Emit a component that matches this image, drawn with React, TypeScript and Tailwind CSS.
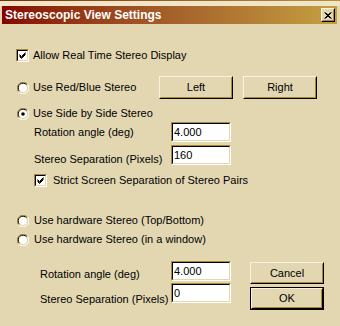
import React from "react";

const BG = "bg-[#E3D7B2]";

function Radio({ checked }: { checked?: boolean }) {
  return (
    <svg width="12" height="12" viewBox="0 0 12 12" className="shrink-0">
      <path d="M10.5 2.2 A5.5 5.5 0 0 0 1.5 9.8" fill="none" stroke="#A8883A" strokeWidth="1" />
      <path d="M9.6 2.8 A4.5 4.5 0 0 0 2.4 9.2" fill="none" stroke="#000" strokeWidth="1" />
      <path d="M1.5 9.8 A5.5 5.5 0 0 0 10.5 2.2" fill="none" stroke="#FFFFFF" strokeWidth="1" />
      <circle cx="6" cy="6" r="4" fill="#FFFFFF" />
      {checked && <circle cx="6" cy="6" r="1.8" fill="#000" />}
    </svg>
  );
}

function Check({ checked }: { checked?: boolean }) {
  return (
    <div className="w-[13px] h-[13px] shrink-0 border border-t-[#A8883A] border-l-[#A8883A] border-b-white border-r-white">
      <div className="w-full h-full border border-t-black border-l-black border-b-[#E3D7B2] border-r-[#E3D7B2] bg-white flex items-center justify-center">
        {checked && (
          <svg width="7" height="7" viewBox="0 0 7 7">
            <path d="M0.5 2.5 L2.5 4.5 L6.5 0.5 M0.5 3.5 L2.5 5.5 L6.5 1.5 M0.5 4.5 L2.5 6.5 L6.5 2.5" stroke="#000" strokeWidth="1" fill="none" />
          </svg>
        )}
      </div>
    </div>
  );
}

function Button({ label, def, className = "" }: { label: string; def?: boolean; className?: string }) {
  const inner = (
    <div className="w-full h-full border border-t-[#F8F2DE] border-l-[#F8F2DE] border-b-black border-r-black">
      <div className="w-full h-full border border-t-[#E3D7B2] border-l-[#E3D7B2] border-b-[#A8883A] border-r-[#A8883A] flex items-center justify-center text-black">
        {label}
      </div>
    </div>
  );
  if (def) {
    return <div className={`border border-black ${className}`}>{inner}</div>;
  }
  return <div className={className}>{inner}</div>;
}

function Input({ value }: { value: string }) {
  return (
    <div className="w-[60px] h-[20px] shrink-0 border border-t-[#A8883A] border-l-[#A8883A] border-b-white border-r-white">
      <div className="w-full h-full border border-t-black border-l-black border-b-[#E3D7B2] border-r-[#E3D7B2] bg-white flex items-center pl-[1px] text-black">
        {value}
      </div>
    </div>
  );
}

export default function App() {
  return (
    <div
      className={`w-[340px] h-[326px] ${BG} overflow-hidden text-[11px] leading-none text-black`}
      style={{ fontFamily: '"Liberation Sans", Arial, sans-serif' }}
    >
      <div className="h-px bg-gradient-to-r from-[#7A2A08] to-[#B8923A]" />
      <div className="h-[5px] bg-[#EFE6CA] mx-0" />
      <div className="h-[18px] mx-[2px] mr-[3px] bg-gradient-to-r from-[#850000] via-[#A4602A] to-[#C4A040] flex items-center justify-between">
        <span className="pl-[3px] text-white font-bold text-[12px]">Stereoscopic View Settings</span>
        <div className="w-[14px] h-[14px] mr-[2px] border border-t-[#F8F2DE] border-l-[#F8F2DE] border-b-black border-r-black">
          <div className="w-full h-full bg-[#E3D7B2] border border-t-[#E3D7B2] border-l-[#E3D7B2] border-b-[#A8883A] border-r-[#A8883A] flex items-center justify-center">
            <svg width="8" height="7" viewBox="0 0 8 7">
              <path d="M0.5 0.5 L6.5 6.5 M1.5 0.5 L7.5 6.5 M6.5 0.5 L0.5 6.5 M7.5 0.5 L1.5 6.5" stroke="#000" strokeWidth="1" fill="none" />
            </svg>
          </div>
        </div>
      </div>

      <div className="flex flex-col">
        <div className="mt-[25px] h-[13px] flex items-center pl-[16px] gap-[4px]">
          <Check checked />
          <span>Allow Real Time Stereo Display</span>
        </div>

        <div className="mt-[14px] h-[23px] flex items-center pl-[17px]">
          <Radio />
          <span className="ml-[4px] w-[126px]">Use Red/Blue Stereo</span>
          <Button label="Left" className="w-[74px] h-[23px]" />
          <Button label="Right" className="ml-[10px] w-[74px] h-[23px]" />
        </div>

        <div className="mt-[8px] h-[13px] flex items-center pl-[17px] gap-[4px]">
          <Radio checked />
          <span>Use Side by Side Stereo</span>
        </div>

        <div className="mt-[2px] h-[20px] flex items-center pl-[34px]">
          <span className="w-[137px]">Rotation angle (deg)</span>
          <Input value="4.000" />
        </div>
        <div className="mt-[3px] h-[20px] flex items-center pl-[34px]">
          <span className="w-[137px] pt-[8px]">Stereo Separation (Pixels)</span>
          <Input value="160" />
        </div>

        <div className="mt-[9px] h-[13px] flex items-center pl-[34px] gap-[6px]">
          <Check checked />
          <span>Strict Screen Separation of Stereo Pairs</span>
        </div>

        <div className="mt-[27px] h-[13px] flex items-center pl-[17px] gap-[5px]">
          <Radio />
          <span>Use hardware Stereo (Top/Bottom)</span>
        </div>
        <div className="mt-[6px] h-[13px] flex items-center pl-[17px] gap-[5px]">
          <Radio />
          <span>Use hardware Stereo (in a window)</span>
        </div>

        <div className="mt-[15px] flex pl-[40px]">
          <div className="flex flex-col gap-[2px]">
            <div className="h-[20px] flex items-center">
              <span className="w-[131px] pt-[6px]">Rotation angle (deg)</span>
              <Input value="4.000" />
            </div>
            <div className="h-[20px] flex items-center">
              <span className="w-[131px] pt-[12px]">Stereo Separation (Pixels)</span>
              <Input value="0" />
            </div>
          </div>
          <div className="ml-[19px] flex flex-col">
            <Button label="Cancel" className="mt-[1px] w-[74px] h-[22px]" />
            <Button label="OK" def className="mt-[3px] w-[74px] h-[23px]" />
          </div>
        </div>
      </div>
    </div>
  );
}
